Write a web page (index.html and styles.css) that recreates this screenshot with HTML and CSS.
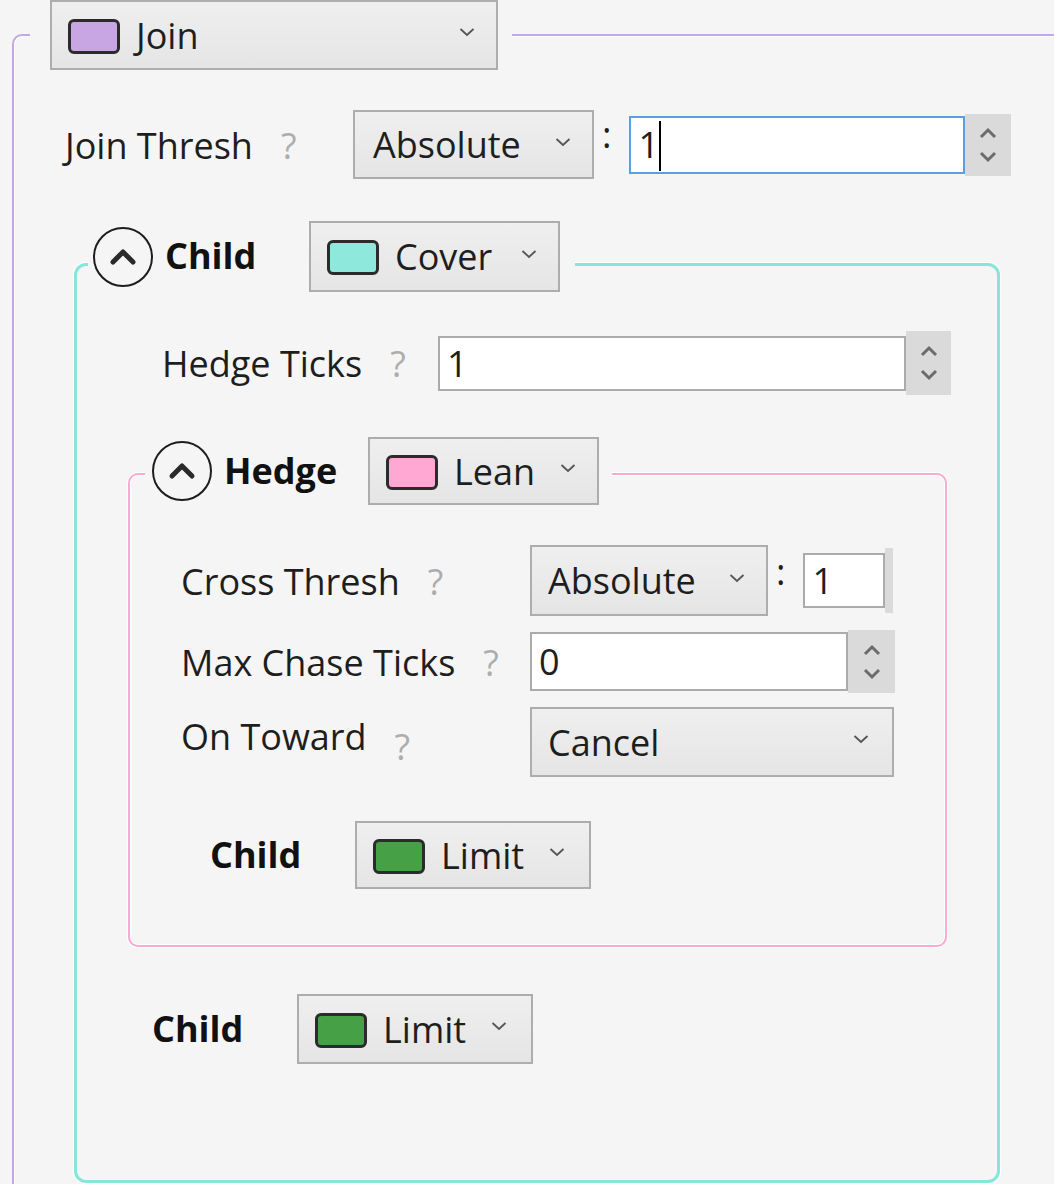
FILE: index.html
```html
<!DOCTYPE html>
<html lang="en">
<head>
  <meta charset="UTF-8" />
  <meta name="viewport" content="width=device-width, initial-scale=1.0" />
  <title>Join settings</title>
  <link rel="stylesheet" href="styles.css">
</head>
<body>

  <svg class="defs" width="0" height="0" aria-hidden="true">
    <symbol id="chev-down" viewBox="0 0 16 10">
      <polyline points="1.5,2 8,8 14.5,2" fill="none" stroke="#555" stroke-width="1.8" />
    </symbol>
    <symbol id="spin" viewBox="0 0 18 36">
      <polyline points="2,10 9,3 16,10" fill="none" stroke="#6b6b6b" stroke-width="3" />
      <polyline points="2,26 9,33 16,26" fill="none" stroke="#6b6b6b" stroke-width="3" />
    </symbol>
    <symbol id="chev-up" viewBox="0 0 30 18">
      <polyline points="5,14 15,4 25,14" fill="none" stroke="#2a2a2a" stroke-width="5" stroke-linecap="round" stroke-linejoin="round" />
    </symbol>
  </svg>

  <fieldset class="group group-join">
    <legend>
      <div class="combo combo-join">
        <span class="swatch swatch-purple"></span>
        <span class="combo-text">Join</span>
        <svg class="chev"><use href="#chev-down" /></svg>
      </div>
    </legend>

    <div class="row row-join-thresh">
      <div class="label label-join">Join Thresh<span class="help">?</span></div>
      <div class="combo combo-abs">
        <span class="combo-text">Absolute</span>
        <svg class="chev"><use href="#chev-down" /></svg>
      </div>
      <span class="colon">:</span>
      <div class="num">
        <div class="field field-join focused">1<span class="caret"></span></div>
        <div class="spinner spinner-join"><svg><use href="#spin" /></svg></div>
      </div>
    </div>

    <fieldset class="group group-cover">
      <legend>
        <div class="head">
          <span class="toggle"><svg><use href="#chev-up" /></svg></span>
          <span class="head-title">Child</span>
          <div class="combo combo-cover">
            <span class="swatch swatch-teal"></span>
            <span class="combo-text">Cover</span>
            <svg class="chev"><use href="#chev-down" /></svg>
          </div>
        </div>
      </legend>

      <div class="row row-hedge-ticks">
        <div class="label label-hedge">Hedge Ticks<span class="help">?</span></div>
        <div class="num">
          <div class="field field-hedge">1</div>
          <div class="spinner spinner-hedge"><svg><use href="#spin" /></svg></div>
        </div>
      </div>

      <fieldset class="group group-lean">
        <legend>
          <div class="head">
            <span class="toggle"><svg><use href="#chev-up" /></svg></span>
            <span class="head-title">Hedge</span>
            <div class="combo combo-lean">
              <span class="swatch swatch-pink"></span>
              <span class="combo-text">Lean</span>
              <svg class="chev"><use href="#chev-down" /></svg>
            </div>
          </div>
        </legend>

        <div class="row row-cross">
          <div class="label label-lean">Cross Thresh<span class="help">?</span></div>
          <div class="combo combo-abs-small">
            <span class="combo-text">Absolute</span>
            <svg class="chev"><use href="#chev-down" /></svg>
          </div>
          <span class="colon colon-low">:</span>
          <div class="num">
            <div class="field field-cross">1</div>
            <div class="spinner spinner-stub"></div>
          </div>
        </div>

        <div class="row row-chase">
          <div class="label label-lean">Max Chase Ticks<span class="help">?</span></div>
          <div class="num">
            <div class="field field-chase">0</div>
            <div class="spinner spinner-chase"><svg><use href="#spin" /></svg></div>
          </div>
        </div>

        <div class="row row-toward">
          <div class="label label-lean label-top">On Toward<span class="help">?</span></div>
          <div class="combo combo-cancel">
            <span class="combo-text">Cancel</span>
            <svg class="chev"><use href="#chev-down" /></svg>
          </div>
        </div>

        <div class="row row-child-inner">
          <span class="child-title">Child</span>
          <div class="combo combo-limit">
            <span class="swatch swatch-green"></span>
            <span class="combo-text">Limit</span>
            <svg class="chev"><use href="#chev-down" /></svg>
          </div>
        </div>
      </fieldset>

      <div class="row row-child-outer">
        <span class="child-title">Child</span>
        <div class="combo combo-limit combo-limit-tall">
          <span class="swatch swatch-green"></span>
          <span class="combo-text">Limit</span>
          <svg class="chev"><use href="#chev-down" /></svg>
        </div>
      </div>
    </fieldset>
  </fieldset>

</body>
</html>
```

FILE: styles.css
```css
/* Reset */
* {
  box-sizing: border-box;
}

html,
body {
  margin: 0;
  height: 100%;
}

body {
  background: #f5f5f5;
  font-family: "Open Sans", "Noto Sans", sans-serif;
  font-size: 36px;
  line-height: 1.36;
  color: #1e1e1e;
  overflow: hidden;
}

.defs {
  position: absolute;
}

/* Group boxes */
.group {
  margin: 0;
  padding: 0;
  min-width: 0;
  border-style: solid;
}

.group > legend {
  padding: 0;
  background: #f5f5f5;
}

.group-join {
  margin-left: 12px;
  width: 1100px;
  min-height: 1300px;
  border-width: 2px;
  border-color: #c6a6ea;
  border-radius: 10px;
  box-shadow: inset 1px 1px 0 #fff;
}

.group-join > legend {
  margin-left: 16px;
  padding: 0 14px 0 20px;
}

.group-cover {
  margin: 42px 0 0 60px;
  width: 926px;
  border-width: 3px;
  border-color: #86e6d9;
  border-radius: 12px;
  padding-bottom: 116px;
  box-shadow: 0 0 0 1px #fff;
}

.group-cover > legend {
  margin-left: 11px;
  padding: 0 15px 16px 5px;
}

.group-lean {
  margin: 42px 0 0 51px;
  width: 819px;
  border-width: 2px;
  border-color: #ffa8d3;
  border-radius: 10px;
  padding-bottom: 56px;
  box-shadow: 0 0 0 1px #fff, inset 0 0 0 1px #fff;
}

.group-lean > legend {
  margin-left: 15px;
  padding: 0 13px 6px 7px;
}

/* Group header */
.head {
  display: flex;
  align-items: center;
}

.toggle {
  width: 60px;
  height: 60px;
  border: 2.5px solid #1d1d1d;
  border-radius: 50%;
  display: flex;
  align-items: center;
  justify-content: center;
  flex-shrink: 0;
}

.toggle svg {
  width: 30px;
  height: 18px;
}

.head-title,
.child-title {
  font-weight: 700;
  color: #111;
  flex-shrink: 0;
}

.head-title {
  width: 144px;
  margin-left: 12px;
}

.child-title {
  width: 145px;
}

/* Combo boxes */
.combo {
  display: flex;
  align-items: center;
  height: 70px;
  padding: 2px 21px 0 16px;
  border: 2px solid #adadad;
  background: linear-gradient(#efefef, #e5e5e5);
  flex-shrink: 0;
}

.combo .chev {
  width: 16px;
  height: 10px;
  margin-left: auto;
  margin-top: -8px;
}

.swatch {
  width: 52px;
  height: 35px;
  border: 3px solid #2b2b2b;
  border-radius: 6px;
  margin-right: 16px;
  flex-shrink: 0;
}

.swatch-purple { background: #c8a6e3; }
.swatch-teal { background: #8ee8dc; }
.swatch-pink { background: #ffa8d4; }
.swatch-green { background: #46a046; }

.combo-join { width: 448px; }
.combo-abs { width: 241px; height: 69px; padding-left: 18px; }
.combo-cover { width: 251px; height: 71px; }
.combo-lean { width: 231px; height: 68px; }
.combo-abs-small { width: 238px; height: 71px; padding-left: 16px; }
.combo-cancel { width: 364px; padding-left: 16px; padding-right: 23px; }
.combo-limit { width: 236px; height: 68px; padding-right: 24px; }
.combo-limit-tall { height: 70px; }

/* Rows */
.row {
  display: flex;
  align-items: center;
}

.label {
  display: flex;
  align-items: center;
  flex-shrink: 0;
  padding-top: 3px;
}

.help {
  color: #adadad;
  margin-left: 28px;
}

.label-join { width: 288px; }
.label-hedge { width: 276px; }
.label-lean { width: 349px; }

.label-top {
  align-self: flex-start;
  align-items: flex-start;
  margin-top: 3px;
}

.label-top .help {
  margin-top: 10px;
}

.row-join-thresh { margin-top: 40px; padding-left: 51px; }
.row-hedge-ticks { margin-top: 23px; padding-left: 85px; }
.row-cross { margin-top: 34px; padding-left: 51px; }
.row-chase { margin-top: 14px; padding-left: 51px; }
.row-toward { margin-top: 14px; padding-left: 51px; }
.row-child-inner { margin-top: 44px; padding-left: 80px; }
.row-child-outer { margin-top: 47px; padding-left: 75px; }

.colon {
  align-self: flex-start;
  margin: 1px 18px 0 8px;
}

.colon-low {
  margin-top: 3px;
}

/* Numeric inputs */
.num {
  display: flex;
  align-items: center;
}

.field {
  display: flex;
  align-items: center;
  padding: 2px 0 0 7px;
  background: #fff;
  border: 2px solid #ababab;
}

.field.focused {
  border-color: #5a9ee6;
}

.caret {
  width: 2px;
  height: 50px;
  margin-left: 0;
  background: #000;
}

.field-join { width: 336px; height: 58px; }
.field-hedge { width: 468px; height: 55px; }
.field-cross { width: 82px; height: 55px; }
.field-chase { width: 318px; height: 59px; }

.spinner {
  display: flex;
  align-items: center;
  justify-content: center;
  background: #dadada;
}

.spinner svg {
  width: 18px;
  height: 36px;
}

.spinner-join { width: 46px; height: 62px; }
.spinner-hedge { width: 45px; height: 64px; }
.spinner-chase { width: 47px; height: 63px; }
.spinner-stub { width: 8px; height: 65px; }
```
